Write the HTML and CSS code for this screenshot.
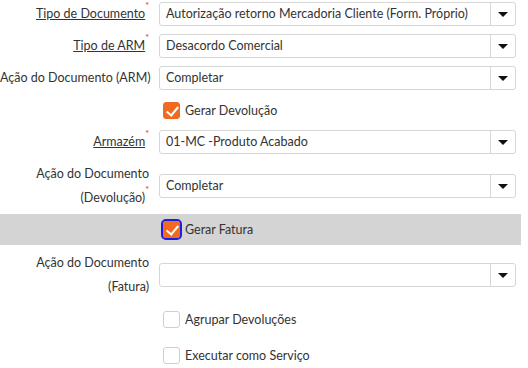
FILE: index.html
```html
<!DOCTYPE html>
<html lang="pt">
<head>
    <meta charset="UTF-8">
    <title>Documento</title>
    <link rel="stylesheet" href="styles.css">
</head>
<body>
    <form class="form">
        <div class="row">
            <label class="lbl"><a href="#">Tipo de Documento</a><sup>*</sup></label>
            <div class="sel"><span class="val">Autorização retorno Mercadoria Cliente (Form. Próprio)</span><span class="btn"><i class="arrow"></i></span></div>
        </div>
        <div class="row">
            <label class="lbl"><a href="#">Tipo de ARM</a><sup>*</sup></label>
            <div class="sel"><span class="val">Desacordo Comercial</span><span class="btn"><i class="arrow"></i></span></div>
        </div>
        <div class="row">
            <label class="lbl nowrap">Ação do Documento (ARM)</label>
            <div class="sel"><span class="val">Completar</span><span class="btn"><i class="arrow"></i></span></div>
        </div>
        <div class="row">
            <span></span>
            <label class="check"><span class="box on"></span>Gerar Devolução</label>
        </div>
        <div class="row">
            <label class="lbl"><a href="#">Armazém</a><sup>*</sup></label>
            <div class="sel"><span class="val">01-MC -Produto Acabado</span><span class="btn"><i class="arrow"></i></span></div>
        </div>
        <div class="row tall gap6">
            <label class="lbl">Ação do Documento<br>(Devolução)<sup>*</sup></label>
            <div class="sel"><span class="val">Completar</span><span class="btn"><i class="arrow"></i></span></div>
        </div>
        <div class="row band">
            <span></span>
            <label class="check"><span class="box on focus"></span>Gerar Fatura</label>
        </div>
        <div class="row tall gap6">
            <label class="lbl">Ação do Documento<br>(Fatura)</label>
            <div class="sel"><span class="val"></span><span class="btn"><i class="arrow"></i></span></div>
        </div>
        <div class="row gap6">
            <span></span>
            <label class="check"><span class="box"></span>Agrupar Devoluções</label>
        </div>
        <div class="row gap8">
            <span></span>
            <label class="check"><span class="box"></span>Executar como Serviço</label>
        </div>
    </form>
</body>
</html>
```

FILE: styles.css
```css
body {
    margin: 0;
    font-family: "Segoe UI", Lato, sans-serif;
    font-size: 12.5px;
    color: #333;
    background: #fff;
}
.form {
    width: 521px;
    display: flex;
    flex-direction: column;
    gap: 4px;
}
.row {
    display: grid;
    grid-template-columns: 150px 357px;
    column-gap: 9px;
    align-items: center;
    height: 28px;
}
.row.tall {
    height: 48px;
}
.gap6 {
    margin-top: 2px;
}
.gap8 {
    margin-top: 4px;
}
.band {
    height: 31px;
    background: #d4d4d4;
}
.band + .row {
    margin-top: 2px;
}
.lbl {
    text-align: right;
    line-height: 24px;
    padding-right: 1px;
}
.nowrap {
    white-space: nowrap;
}
.lbl a {
    color: #333;
    text-decoration: underline;
}
.lbl sup {
    color: #e0332b;
    font-size: 9px;
    line-height: 0;
    vertical-align: 9px;
}
.sel {
    display: flex;
    height: 24px;
    box-sizing: border-box;
    border: 1px solid #d6d6d6;
    border-radius: 3px;
    background: #fff;
}
.val {
    flex: 1;
    padding-left: 6px;
    line-height: 22px;
    white-space: nowrap;
    overflow: hidden;
}
.btn {
    width: 24px;
    border-left: 1px solid #d6d6d6;
    display: flex;
    align-items: center;
    justify-content: center;
}
.arrow {
    width: 0;
    height: 0;
    border-left: 5px solid transparent;
    border-right: 5px solid transparent;
    border-top: 5px solid #111;
}
.check {
    display: flex;
    align-items: center;
    gap: 5px;
    padding-left: 4px;
}
.box {
    width: 17px;
    height: 17px;
    box-sizing: border-box;
    border: 1px solid #cfcfcf;
    border-radius: 3px;
    background: #fff;
    position: relative;
}
.box.on {
    background: #f26a22;
    border-color: #f26a22;
}
.box.on::after {
    content: "";
    position: absolute;
    left: 5px;
    top: 1px;
    width: 5px;
    height: 10px;
    border: solid #fff;
    border-width: 0 2px 2px 0;
    transform: rotate(40deg);
}
.box.focus {
    outline: 2px solid #1b1ee0;
    outline-offset: 0;
}
```
